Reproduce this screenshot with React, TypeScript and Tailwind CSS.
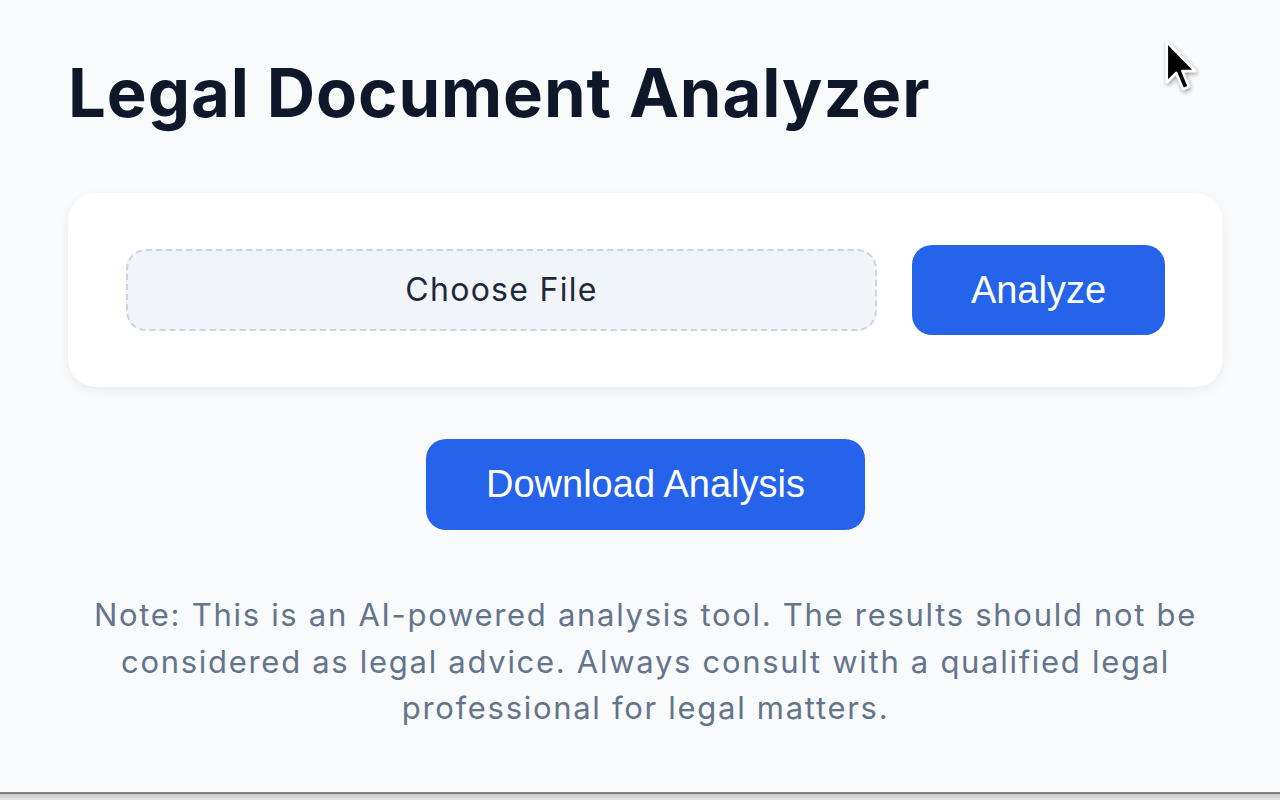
import { useRef } from 'react';

function Cursor() {
  return (
    <svg
      className="pointer-events-none absolute left-[1164px] top-[39px] drop-shadow-[1px_2px_2px_rgba(0,0,0,0.35)]"
      width="38"
      height="57"
      viewBox="0 0 14 21"
    >
      <path d="M1 1 L1 16 L4.5 12.5 L7 18.5 L9.2 17.6 L6.8 11.8 L11.5 11.8 Z" fill="#000" stroke="#fff" strokeWidth="1" strokeLinejoin="round" />
    </svg>
  );
}

export default function App() {
  const fileRef = useRef<HTMLInputElement>(null);

  return (
    <div className="relative flex h-[800px] flex-col overflow-hidden bg-[#f8fafc] font-['Inter','Noto_Sans',sans-serif]">
      <main className="flex-1 px-[68px] pt-[59px]">
        <div className="w-[1155px]">
          <h1 className="text-[67px] font-bold leading-none tracking-[0.014em] text-[#0f172a]">
            Legal Document Analyzer
          </h1>

          <section className="mt-[67px] flex items-center gap-[35px] rounded-[28px] bg-white px-[58px] py-[52px] shadow-[0_4px_12px_rgba(15,23,42,0.06)]">
            <input ref={fileRef} type="file" className="hidden" />
            <button
              onClick={() => fileRef.current?.click()}
              className="flex h-[82px] flex-1 items-center justify-center rounded-[20px] border-2 border-dashed border-[#cbd5e1] bg-[#f1f5f9] text-[32px] tracking-[0.04em] text-[#1e293b]"
            >
              Choose File
            </button>
            <button className="h-[90px] w-[253px] rounded-[20px] bg-[#2563eb] font-['Liberation_Sans',Arial,sans-serif] text-[38px] text-white">
              Analyze
            </button>
          </section>

          <div className="mt-[52px] flex justify-center">
            <button className="h-[91px] w-[439px] rounded-[20px] bg-[#2563eb] font-['Liberation_Sans',Arial,sans-serif] text-[38px] text-white">
              Download Analysis
            </button>
          </div>

          <p className="mt-[62px] text-center text-[31px] leading-[46.5px] tracking-[0.055em] text-[#64748b]">
            Note: This is an AI-powered analysis tool. The results should not be considered as legal advice. Always
            consult with a qualified legal professional for legal matters.
          </p>
        </div>
      </main>
      <div className="h-[2px] bg-[#7f7f7f]" />
      <div className="h-[6px] bg-gradient-to-b from-[#c8c8c8] to-[#e6e6e6]" />
      <Cursor />
    </div>
  );
}
